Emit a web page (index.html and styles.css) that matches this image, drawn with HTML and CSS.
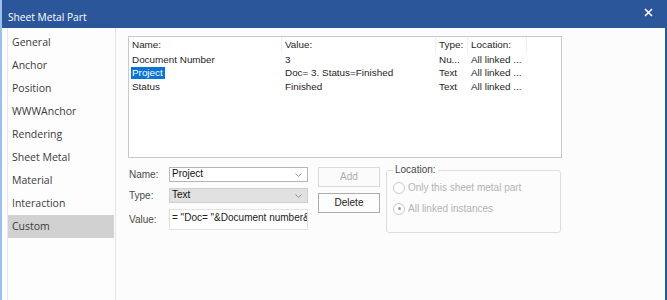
FILE: index.html
```html
<!DOCTYPE html>
<html>
<head>
<meta charset="utf-8">
<link rel="stylesheet" href="styles.css">
</head>
<body>
<div class="window">
  <div class="titlebar">
    <span class="title">Sheet Metal Part</span>
    <svg class="close" width="9" height="9" viewBox="0 0 9 9"><path d="M1 1 L8 8 M8 1 L1 8" stroke="#fff" stroke-width="1.6" fill="none"/></svg>
  </div>
  <div class="body">
    <ul class="sidebar">
      <li class="nav-item">General</li>
      <li class="nav-item">Anchor</li>
      <li class="nav-item">Position</li>
      <li class="nav-item">WWWAnchor</li>
      <li class="nav-item">Rendering</li>
      <li class="nav-item">Sheet Metal</li>
      <li class="nav-item">Material</li>
      <li class="nav-item">Interaction</li>
      <li class="nav-item active">Custom</li>
    </ul>
    <div class="main">
      <div class="list">
        <div class="head">Name:</div>
        <div class="head">Value:</div>
        <div class="head">Type:</div>
        <div class="head">Location:</div>
        <div class="cell">Document Number</div>
        <div class="cell">3</div>
        <div class="cell">Nu...</div>
        <div class="cell">All linked ...</div>
        <div class="cell"><span class="selected">Project</span></div>
        <div class="cell">Doc= 3. Status=Finished</div>
        <div class="cell">Text</div>
        <div class="cell">All linked ...</div>
        <div class="cell">Status</div>
        <div class="cell">Finished</div>
        <div class="cell">Text</div>
        <div class="cell">All linked ...</div>
      </div>
      <div class="form">
        <div class="fields">
          <label class="lbl">Name:</label>
          <div class="combo"><span>Project</span><svg width="7" height="4" viewBox="0 0 7 4"><path d="M0.5 0.5 L3.5 3.3 L6.5 0.5" stroke="#8a8a8a" stroke-width="0.9" fill="none"/></svg></div>
          <label class="lbl">Type:</label>
          <div class="combo grey"><span>Text</span><svg width="7" height="4" viewBox="0 0 7 4"><path d="M0.5 0.5 L3.5 3.3 L6.5 0.5" stroke="#8a8a8a" stroke-width="0.9" fill="none"/></svg></div>
          <label class="lbl">Value:</label>
          <div class="value">= "Doc= "&amp;Document number&amp;" Status="&amp;Status</div>
        </div>
        <div class="buttons">
          <div class="btn disabled">Add</div>
          <div class="btn">Delete</div>
        </div>
        <fieldset class="group">
          <legend class="legend">Location:</legend>
          <div class="radio-row"><span class="radio"></span><span>Only this sheet metal part</span></div>
          <div class="radio-row"><span class="radio checked"></span><span>All linked instances</span></div>
        </fieldset>
      </div>
    </div>
  </div>
</div>
</body>
</html>
```
FILE: styles.css
```css
* { box-sizing: border-box; }
html, body { margin: 0; padding: 0; }
body { width: 667px; height: 300px; overflow: hidden; background: #fcfcfc; }

.window {
  height: 300px;
  display: flex;
  flex-direction: column;
  border-left: 2px solid #9cc0ec;
  border-right: 2px solid #2b579a;
  background: #fcfcfc;
}
.titlebar {
  height: 28px;
  flex: none;
  background: #2b579a;
  display: flex;
  justify-content: space-between;
  align-items: flex-start;
  padding: 0 12px 0 6px;
}
.title {
  font-family: "Open Sans", sans-serif;
  font-size: 10.2px;
  color: #fff;
  line-height: 14px;
  margin-top: 10px;
}
.close { margin-top: 8px; }

.body { flex: 1; display: flex; align-items: stretch; }

.sidebar {
  list-style: none;
  margin: 0 0 0 5px;
  padding: 3px 0 0 0;
  width: 109px;
  border: 1px solid #e6e6e6;
  border-top: none;
  border-bottom: none;
  background: #fdfdfd;
}
.nav-item {
  height: 23px;
  line-height: 23px;
  padding-left: 4px;
  margin-right: 1px;
  font-family: "Open Sans", sans-serif;
  font-size: 10.5px;
  color: #3b3b3b;
}
.nav-item.active { background: #d1d1d1; }

.main { margin-left: 12px; padding-top: 8px; }

.list {
  width: 434px;
  height: 122px;
  border: 1px solid #c9c9c9;
  background: #fff;
  display: grid;
  grid-template-columns: 153px 154px 32px 59px;
  grid-auto-rows: 13.5px;
  grid-template-rows: 15.5px;
  align-content: start;
  font-family: "Liberation Sans", Arial, sans-serif;
  font-size: 9.9px;
  color: #1e1e1e;
}
.head {
  padding-left: 3px;
  line-height: 15.5px;
  border-right: 1px solid #efefef;
  white-space: nowrap;
  overflow: hidden;
}
.cell {
  padding-left: 3px;
  line-height: 13.5px;
  white-space: nowrap;
  overflow: hidden;
}
.selected {
  display: inline-block;
  background: #0a74d6;
  color: #fff;
  line-height: 12px;
  padding: 0 2px 0 1px;
  margin-left: -1px;
}

.form {
  display: flex;
  align-items: flex-start;
  margin-top: 6px;
  font-family: "Liberation Sans", Arial, sans-serif;
  font-size: 10px;
}
.fields {
  margin-top: 3px;
  display: grid;
  grid-template-columns: 41px 139px;
  row-gap: 6px;
  align-items: center;
}
.lbl { color: #4a4a4a; padding-left: 1px; }
.combo {
  height: 15px;
  border: 1px solid #b4b4b4;
  background: #fff;
  display: flex;
  align-items: center;
  justify-content: space-between;
  padding: 0 5px 0 2px;
  color: #111;
}
.combo span { line-height: 12px; margin-top: -2px; }
.combo.grey { background: #e1e1e1; border-color: #cfcfcf; }
.value {
  height: 21px;
  border: 1px solid #e2e2e2;
  background: #fff;
  padding: 1px 0 0 2px;
  color: #222;
  white-space: nowrap;
  overflow: hidden;
  line-height: 13px;
  align-self: start;
}

.buttons {
  margin: 3px 0 0 10px;
  display: flex;
  flex-direction: column;
  gap: 6px;
}
.btn {
  width: 62px;
  height: 20px;
  border: 1px solid #acacac;
  background: #fdfdfd;
  color: #222;
  text-align: center;
  line-height: 18px;
}
.btn.disabled { border-color: #dadada; color: #adadad; background: #fbfbfb; }

.group {
  margin: 0 0 0 6px;
  width: 175px;
  padding: 0 6px 17px 6px;
  border: 1px solid #dedede;
  border-radius: 3px;
  min-width: 0;
}
.legend {
  padding: 0 2px;
  line-height: 12px;
  color: #4a4a4a;
}
.radio-row {
  display: flex;
  align-items: center;
  gap: 3px;
  height: 13px;
  color: #b3b3b3;
  margin-top: 5px;
}
.radio-row + .radio-row { margin-top: 8px; }
.radio {
  width: 12px;
  height: 12px;
  border: 1px solid #c9c9c9;
  border-radius: 50%;
  background: #fff;
  display: flex;
  align-items: center;
  justify-content: center;
}
.radio.checked::after {
  content: "";
  width: 3px;
  height: 3px;
  border-radius: 50%;
  background: #9a9a9a;
}
```
